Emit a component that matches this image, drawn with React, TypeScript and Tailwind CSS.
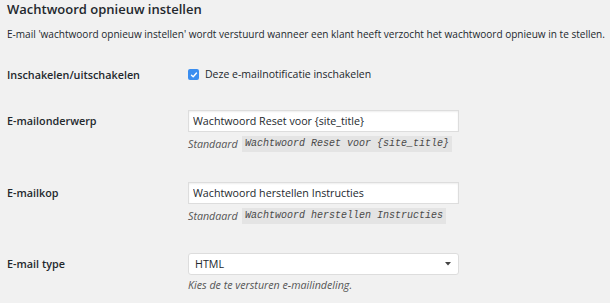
import React from "react";

const font = { fontFamily: '"Open Sans", "Liberation Sans", sans-serif' };

function Row({ label, children, top }: { label: string; children: React.ReactNode; top: string }) {
  return (
    <div className={`flex items-start ${top}`}>
      <div className="w-[181px] shrink-0 text-[10.8px] font-semibold text-[#23282d] leading-[22px]">{label}</div>
      <div className="flex flex-col">{children}</div>
    </div>
  );
}

function Standaard({ value }: { value: string }) {
  return (
    <div className="mt-[4px] flex items-center h-[16px] text-[10.7px] italic text-[#555]">
      <span className="w-[54px] shrink-0">Standaard</span>
      <code className="h-[16px] px-[3px] bg-[#e4e4e4] text-[#4a4a4a] leading-[16px] font-['Liberation_Mono',monospace] text-[10px] italic">
        {value}
      </code>
    </div>
  );
}

export default function App() {
  return (
    <div className="w-[610px] h-[303px] bg-[#f1f1f1] pl-[7px] overflow-hidden" style={font}>
      <h2 className="text-[13px] font-semibold text-[#23282d] leading-[18px]">Wachtwoord opnieuw instellen</h2>
      <p className="mt-[9px] text-[10.05px] text-[#23282d] leading-[14px] whitespace-nowrap">
        E-mail 'wachtwoord opnieuw instellen' wordt verstuurd wanneer een klant heeft verzocht het wachtwoord opnieuw in te stellen.
      </p>

      {/* Enable */}
      <div className="mt-[26px] flex items-center h-[15px]">
        <div className="w-[181px] shrink-0 text-[10.8px] font-semibold text-[#23282d] leading-[15px]">Inschakelen/uitschakelen</div>
        <span className="w-[11px] h-[11px] rounded-[2px] bg-[#3b8ef0] flex items-center justify-center">
          <svg width="8" height="8" viewBox="0 0 8 8" fill="none">
            <path d="M1.5 4.2 L3.2 5.8 L6.5 2" stroke="white" strokeWidth="1.4" strokeLinecap="round" strokeLinejoin="round" />
          </svg>
        </span>
        <span className="ml-[6px] text-[10.5px] text-[#23282d] leading-[15px]">Deze e-mailnotificatie inschakelen</span>
      </div>

      {/* Subject */}
      <Row label="E-mailonderwerp" top="mt-[28px]">
        <input
          readOnly
          value="Wachtwoord Reset voor {site_title}"
          className="w-[271px] h-[22px] bg-white border border-[#ddd] px-[4px] text-[10.7px] text-[#23282d] outline-none shadow-[inset_0_1px_2px_rgba(0,0,0,0.07)]"
          style={font}
        />
        <Standaard value="Wachtwoord Reset voor {site_title}" />
      </Row>

      {/* Heading */}
      <Row label="E-mailkop" top="mt-[30px]">
        <input
          readOnly
          value="Wachtwoord herstellen Instructies"
          className="w-[271px] h-[22px] bg-white border border-[#ddd] px-[4px] text-[10.7px] text-[#23282d] outline-none shadow-[inset_0_1px_2px_rgba(0,0,0,0.07)]"
          style={font}
        />
        <Standaard value="Wachtwoord herstellen Instructies" />
      </Row>

      {/* Type */}
      <Row label="E-mail type" top="mt-[29px]">
        <div className="w-[271px] h-[22px] bg-white border border-[#ddd] rounded-[3px] pl-[6px] pr-[7px] flex items-center justify-between text-[10.7px] text-[#23282d]">
          <span>HTML</span>
          <svg width="6" height="4" viewBox="0 0 6 4">
            <path d="M0 0 H6 L3 3.5 Z" fill="#444" />
          </svg>
        </div>
        <div className="mt-[3px] text-[10.7px] italic text-[#555] leading-[14px]">Kies de te versturen e-mailindeling.</div>
      </Row>
    </div>
  );
}
